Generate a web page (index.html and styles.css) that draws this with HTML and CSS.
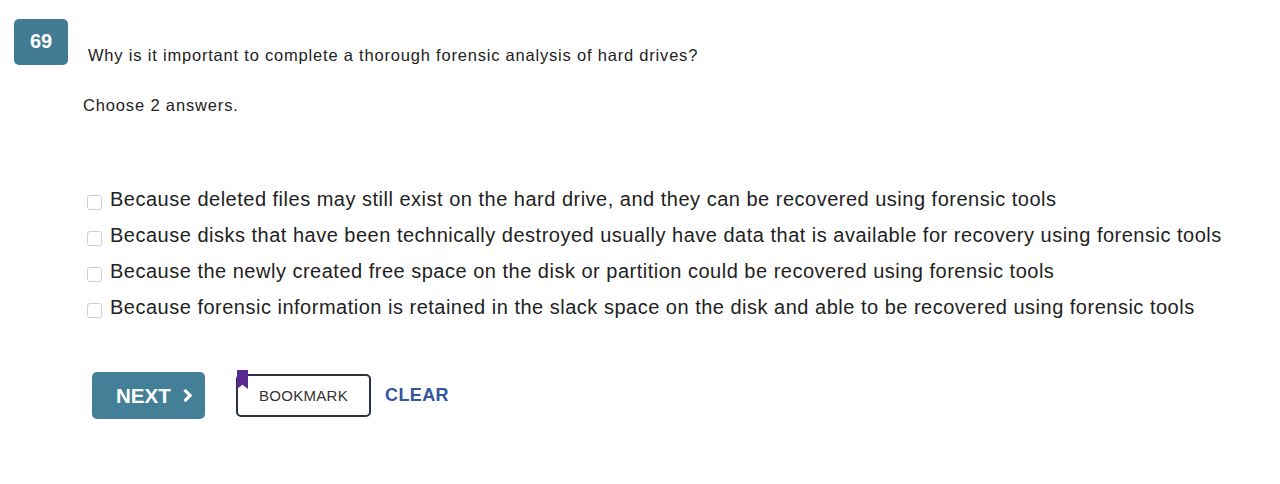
FILE: index.html
```html
<!DOCTYPE html>
<html>
<head>
<meta charset="utf-8">
<link rel="stylesheet" href="styles.css">
</head>
<body>
<div class="page">
  <div class="header">
    <div class="badge">69</div>
    <div class="question">Why is it important to complete a thorough forensic analysis of hard drives?</div>
  </div>
  <div class="instruction">Choose 2 answers.</div>
  <ul class="options">
    <li class="option"><span class="box"></span><span class="label">Because deleted files may still exist on the hard drive, and they can be recovered using forensic tools</span></li>
    <li class="option"><span class="box"></span><span class="label">Because disks that have been technically destroyed usually have data that is available for recovery using forensic tools</span></li>
    <li class="option"><span class="box"></span><span class="label">Because the newly created free space on the disk or partition could be recovered using forensic tools</span></li>
    <li class="option"><span class="box"></span><span class="label">Because forensic information is retained in the slack space on the disk and able to be recovered using forensic tools</span></li>
  </ul>
  <div class="actions">
    <button class="next">NEXT <svg class="chev" width="11" height="15" viewBox="0 0 11 15"><path d="M2.5 1.8 L8.2 7.5 L2.5 13.2" fill="none" stroke="#fff" stroke-width="3.2"/></svg></button>
    <button class="bookmark"><span class="flag"></span>BOOKMARK</button>
    <button class="clear">CLEAR</button>
  </div>
</div>
</body>
</html>
```

FILE: styles.css
```css
html, body {
  margin: 0;
  padding: 0;
  background: #fff;
}
body {
  font-family: "Liberation Sans", Arial, Helvetica, sans-serif;
  color: #222;
}
.page {
  padding: 19px 0 0 14px;
}
.header {
  display: flex;
  align-items: flex-end;
}
.badge {
  width: 54px;
  height: 46px;
  background: #427c94;
  color: #fff;
  border-radius: 5px;
  font-weight: bold;
  font-size: 20px;
  display: flex;
  align-items: center;
  justify-content: center;
  padding-bottom: 2px;
  box-sizing: border-box;
}
.question {
  margin-left: 20px;
  font-size: 16.5px;
  line-height: 18px;
  margin-bottom: 1px;
  letter-spacing: 0.8px;
}
.instruction {
  margin: 31px 0 0 69px;
  font-size: 16.5px;
  line-height: 18px;
  letter-spacing: 0.85px;
}
.options {
  list-style: none;
  margin: 67px 0 0 73px;
  padding: 0;
}
.option {
  display: flex;
  align-items: center;
  height: 36px;
}
.box {
  width: 15px;
  height: 15px;
  border: 1px solid #cfcfcf;
  border-radius: 3px;
  box-sizing: border-box;
  margin-top: 6px;
  margin-right: 8px;
}
.label {
  font-size: 20px;
  line-height: 22px;
  color: #222;
  letter-spacing: 0.5px;
}
.actions {
  display: flex;
  align-items: center;
  margin: 47px 0 0 78px;
}
button {
  font-family: inherit;
  cursor: pointer;
}
.next {
  width: 113px;
  height: 47px;
  background: #437f97;
  color: #fff;
  border: none;
  border-radius: 5px;
  font-size: 20.5px;
  font-weight: bold;
  display: flex;
  align-items: center;
  justify-content: flex-start;
  gap: 11px;
  padding: 0 0 0 24px;
  letter-spacing: 0;
}
.chev {
  display: block;
}
.bookmark {
  position: relative;
  margin-left: 31px;
  width: 135px;
  height: 43px;
  background: #fff;
  border: 2px solid #2b3245;
  border-radius: 5px;
  color: #333;
  font-size: 15px;
  letter-spacing: 0.3px;
  padding: 0;
}
.flag {
  position: absolute;
  left: -1px;
  top: -6px;
  width: 11px;
  height: 19px;
  background: #5a2a93;
  clip-path: polygon(0 0, 100% 0, 100% 100%, 50% 78%, 0 100%);
}
.clear {
  margin-left: 14px;
  background: none;
  border: none;
  padding: 0;
  color: #34559f;
  font-size: 18px;
  font-weight: bold;
  letter-spacing: 0.4px;
}
```
